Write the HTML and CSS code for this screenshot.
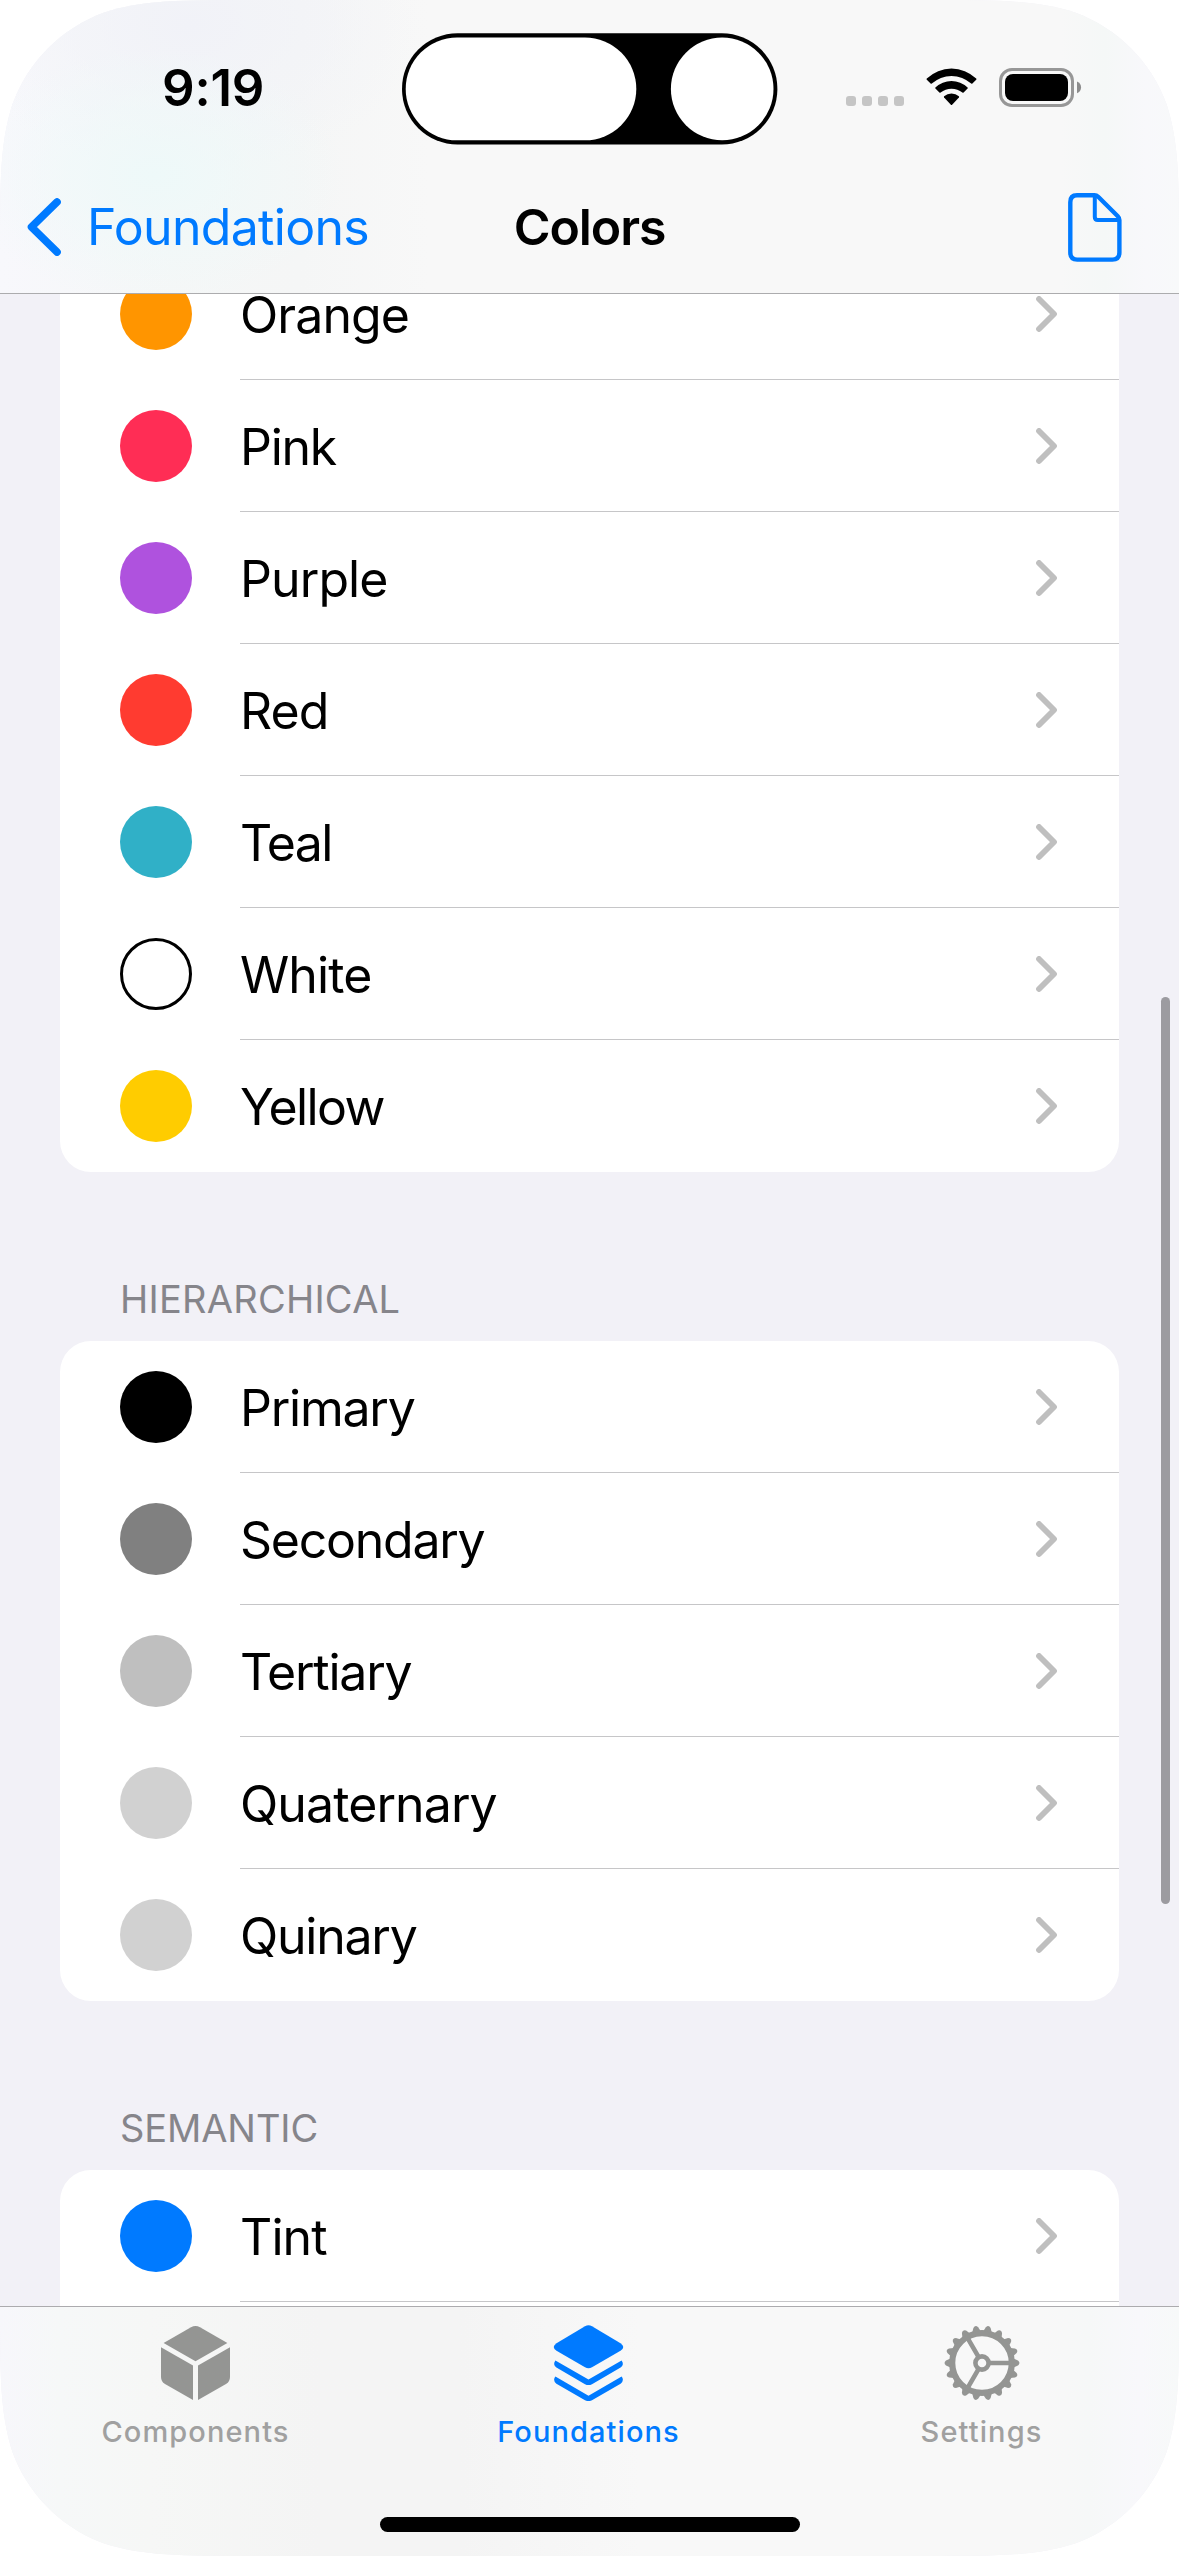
FILE: index.html
```html
<!DOCTYPE html>
<html lang="en">
<head>
<meta charset="utf-8">
<title>Colors</title>
<link rel="stylesheet" href="styles.css">
</head>
<body>
<svg class="defs" width="0" height="0" aria-hidden="true">
  <symbol id="chevron" viewBox="0 0 21 36"><path d="M3 3 L18 18 L3 33" fill="none" stroke="#bfbfbf" stroke-width="5.8" stroke-linecap="round" stroke-linejoin="round"/></symbol>
</svg>
<div class="screen">
  <header class="top">
    <div class="status">
      <div class="time">9:19</div>
      <svg class="island" width="376" height="112" viewBox="0 0 376 112">
        <rect x="0" y="0.3" width="375.4" height="111.2" rx="55.6" fill="#000"/>
        <rect x="3.7" y="4.5" width="230.6" height="102.8" rx="51.4" fill="#fff"/>
        <circle cx="320.2" cy="55.9" r="51.3" fill="#fff"/>
      </svg>
      <div class="indicators">
        <svg class="cell" width="58" height="10" viewBox="0 0 58 10" fill="#c5c5c5"><rect width="10" height="10" rx="3"/><rect x="16" width="10" height="10" rx="3"/><rect x="32" width="10" height="10" rx="3"/><rect x="48" width="10" height="10" rx="3"/></svg>
        <svg width="51" height="38" viewBox="0 0 51 38">
          <path d="M0.8 10.6 A35.5 35.5 0 0 1 50.2 10.6 Q50.7 11.2 50.2 11.8 L46.4 15.6 Q45.8 16.1 45.2 15.6 A29 29 0 0 0 5.8 15.6 Q5.2 16.1 4.6 15.6 L0.8 11.8 Q0.3 11.2 0.8 10.6Z"/>
          <path d="M9.4 19.4 A23.5 23.5 0 0 1 41.6 19.4 Q42.1 20 41.6 20.6 L37.6 24.6 Q37 25.1 36.4 24.6 A17 17 0 0 0 14.6 24.6 Q14 25.1 13.4 24.6 L9.4 20.6 Q8.9 20 9.4 19.4Z"/>
          <path d="M18.1 28.3 A11.5 11.5 0 0 1 32.9 28.3 Q33.4 28.9 32.9 29.5 L26.1 36.7 Q25.5 37.2 24.9 36.7 L18.1 29.5 Q17.6 28.9 18.1 28.3Z"/>
        </svg>
        <svg class="battery" width="83" height="39" viewBox="0 0 83 39"><rect x="1.5" y="1.5" width="72" height="36" rx="11.5" fill="none" stroke="#979797" stroke-width="3"/><rect x="6" y="6" width="63" height="27" rx="8"/><path d="M78 13.6 C83.4 15.4 83.4 23.4 78 25.2Z" fill="#8c8c8c"/></svg>
      </div>
    </div>
    <nav class="navbar">
      <a class="back"><svg width="34" height="58" viewBox="0 0 34 58"><path d="M30 4 L4.5 29 L30 54" fill="none" stroke="#007aff" stroke-width="7.6" stroke-linecap="round" stroke-linejoin="round"/></svg><span>Foundations</span></a>
      <h1>Colors</h1>
      <svg class="doc" width="54" height="69" viewBox="0 0 54 69" fill="none" stroke="#007aff" stroke-width="4.4" stroke-linejoin="round"><path d="M9 2.3 H26.5 Q28.6 2.3 30.2 3.8 L49.8 23.2 Q51.4 24.8 51.4 27 V59.5 Q51.4 66.6 44.4 66.6 H9.2 Q2.3 66.6 2.3 59.5 V9.2 Q2.3 2.3 9 2.3Z"/><path d="M26.8 3.5 V24 Q26.8 27 29.8 27 H50.5" stroke-width="4"/></svg>
    </nav>
  </header>
  <main class="content">
    <ul class="card first">
      <li class="row"><i class="dot orange"></i><div class="cell-body"><span>Orange</span><svg class="chev"><use href="#chevron"/></svg></div></li>
      <li class="row"><i class="dot pink"></i><div class="cell-body"><span class="snug">Pink</span><svg class="chev"><use href="#chevron"/></svg></div></li>
      <li class="row"><i class="dot purple"></i><div class="cell-body"><span>Purple</span><svg class="chev"><use href="#chevron"/></svg></div></li>
      <li class="row"><i class="dot red"></i><div class="cell-body"><span>Red</span><svg class="chev"><use href="#chevron"/></svg></div></li>
      <li class="row"><i class="dot teal"></i><div class="cell-body"><span class="tight">Teal</span><svg class="chev"><use href="#chevron"/></svg></div></li>
      <li class="row"><i class="dot white"></i><div class="cell-body"><span>White</span><svg class="chev"><use href="#chevron"/></svg></div></li>
      <li class="row"><i class="dot yellow"></i><div class="cell-body"><span class="tight">Yellow</span><svg class="chev"><use href="#chevron"/></svg></div></li>
    </ul>
    <h2 class="wide">HIERARCHICAL</h2>
    <ul class="card">
      <li class="row"><i class="dot primary"></i><div class="cell-body"><span class="snug">Primary</span><svg class="chev"><use href="#chevron"/></svg></div></li>
      <li class="row"><i class="dot secondary"></i><div class="cell-body"><span class="snug">Secondary</span><svg class="chev"><use href="#chevron"/></svg></div></li>
      <li class="row"><i class="dot tertiary"></i><div class="cell-body"><span class="snug">Tertiary</span><svg class="chev"><use href="#chevron"/></svg></div></li>
      <li class="row"><i class="dot quaternary"></i><div class="cell-body"><span>Quaternary</span><svg class="chev"><use href="#chevron"/></svg></div></li>
      <li class="row"><i class="dot quinary"></i><div class="cell-body"><span class="snug">Quinary</span><svg class="chev"><use href="#chevron"/></svg></div></li>
    </ul>
    <h2>SEMANTIC</h2>
    <ul class="card continued">
      <li class="row"><i class="dot tint"></i><div class="cell-body"><span>Tint</span><svg class="chev"><use href="#chevron"/></svg></div></li>
    </ul>
    <div class="scrollbar"></div>
  </main>
  <footer class="tabs">
    <div class="tab-row">
      <a class="tab">
        <svg width="76" height="76" viewBox="0 0 76 76" fill="#949593"><path d="M5.6 18 L33 2.2 Q37.5 -0.2 42 2.2 L69.4 18 L37.5 36.2Z"/><path d="M3 22.2 L35 40.6 V75 L7 59 Q3 56.5 3 52Z"/><path d="M72 22.2 L40 40.6 V75 L68 59 Q72 56.5 72 52Z"/></svg>
        <span>Components</span>
      </a>
      <a class="tab active">
        <svg width="76" height="76" viewBox="0 0 76 76" fill="#007aff"><path d="M34 1.2 Q37.5 -0.8 41 1.2 L69.5 18.2 Q75 22 69.5 25.8 L41 42.3 Q37.5 44.2 34 42.3 L5.5 25.8 Q0 22 5.5 18.2Z"/><path d="M4.4 35.4 L37.5 54.6 L70.6 35.4 Q73.6 39.2 69.6 42.6 L41 59.2 Q37.5 61 34 59.2 L5.4 42.6 Q1.4 39.2 4.4 35.4Z"/><path d="M4.4 51.6 L37.5 70.8 L70.6 51.6 Q73.6 55.4 69.6 58.8 L41 75.2 Q37.5 77 34 75.2 L5.4 58.8 Q1.4 55.4 4.4 51.6Z"/></svg>
        <span>Foundations</span>
      </a>
      <a class="tab">
        <svg width="76" height="76" viewBox="-38 -38 76 76" fill="none" stroke="#949593">
          <circle r="29.8" stroke-width="6.2"/>
          <circle r="6.6" stroke-width="4.6"/>
          <path stroke-width="4.6" d="M7 0 H29 M-3.5 -6.1 L-14.5 -25.1 M-3.5 6.1 L-14.5 25.1"/>
          <g id="teeth" fill="#949593" stroke="none">
            <g id="quad"><path id="tooth" d="M31.5 -4.4 L36 -2.4 Q38.9 0 36 2.4 L31.5 4.4Z"/><use href="#tooth" transform="rotate(20)"/><use href="#tooth" transform="rotate(40)"/></g>
            <use href="#quad" transform="rotate(60)"/><use href="#quad" transform="rotate(120)"/><use href="#quad" transform="rotate(180)"/><use href="#quad" transform="rotate(240)"/><use href="#quad" transform="rotate(300)"/>
          </g>
        </svg>
        <span>Settings</span>
      </a>
    </div>
    <div class="home"></div>
  </footer>
</div>
</body>
</html>
```
FILE: styles.css
```css
* { box-sizing: border-box; }
body {
  margin: 0;
  background: #fff;
  color: #000;
  font-family: Inter, "Liberation Sans", sans-serif;
}
.defs { position: absolute; }
svg { display: block; flex: none; }
h1, h2, ul { margin: 0; padding: 0; }
.screen {
  width: 1179px;
  height: 2556px;
  display: flex;
  flex-direction: column;
  background: #f2f1f7;
  overflow: hidden;
  clip-path: path("M252 0 H927 C999 0 1036 0 1075 12.4 C1117.5 27.9 1151 61.5 1166.6 104.2 C1179 143 1179 180 1179 252 V2304 C1179 2376 1179 2413 1166.6 2452 C1151 2494.5 1117.5 2528 1075 2543.6 C1036 2556 999 2556 927 2556 H252 C180 2556 143 2556 104.2 2543.6 C61.5 2528 27.9 2494.5 12.4 2452 C0 2413 0 2376 0 2304 V252 C0 180 0 143 12.4 104.2 C27.9 61.5 61.5 27.9 104.2 12.4 C143 0 180 0 252 0 Z");
}
.top {
  height: 294px;
  flex: none;
  border-bottom: 1px solid #acacae;
  background:
    radial-gradient(ellipse 190px 130px at 155px 175px, #eef9f9 0%, #eef9f900 100%),
    radial-gradient(ellipse 230px 150px at 190px 25px, #f1f2f8 0%, #f1f2f800 100%),
    linear-gradient(90deg, #f8f8fc 0, #f5f7f7 170px, #f5f6f6 300px, #f8f8f8 430px, #f8f8f8 1060px, #f5f8f7 1105px, #f8f8fb 1145px, #f8f9fa 100%);
}
.status {
  height: 162px;
  display: grid;
  grid-template-columns: 402px 376px 401px;
}
.time {
  padding: 58px 0 0 162px;
  font-size: 51px;
  line-height: 60px;
  font-weight: 600;
  letter-spacing: -0.2px;
}
.island { margin-top: 33px; }
.indicators {
  display: flex;
  align-items: flex-end;
  height: 106px;
  padding-left: 68px;
}
.cell { margin-right: 22px; }
.battery { margin: 0 0 -1px 22px; }
.navbar {
  height: 131px;
  padding: 0 57px;
  display: grid;
  grid-template-columns: 1fr auto 1fr;
  align-items: center;
}
.back {
  margin-left: -30px;
  display: flex;
  align-items: center;
  gap: 26px;
  color: #007aff;
  font-size: 50px;
  line-height: 60px;
  letter-spacing: -0.7px;
}
.back svg { margin-top: -1px; }
.back span, h1 { padding-bottom: 2px; }
h1 {
  font-size: 50px;
  line-height: 60px;
  font-weight: 600;
  letter-spacing: -1.1px;
}
.doc { justify-self: end; }
.content {
  position: relative;
  flex: 1;
  min-height: 0;
  overflow: hidden;
  padding: 0 60px;
}
.card {
  list-style: none;
  background: #fff;
  border-radius: 31px;
}
.first { margin-top: -46px; }
.continued { padding-bottom: 60px; }
.row {
  height: 132px;
  padding-left: 60px;
  display: flex;
  align-items: center;
}
.dot {
  width: 72px;
  height: 72px;
  border-radius: 50%;
  margin-right: 48px;
  flex: none;
}
.cell-body {
  flex: 1;
  height: 132px;
  border-bottom: 1px solid #c6c6c8;
  padding-right: 62px;
  display: flex;
  align-items: center;
  justify-content: space-between;
}
.row:last-child .cell-body { border-bottom-color: transparent; }
.continued .row:last-child .cell-body { border-bottom-color: #c6c6c8; }
.cell-body span {
  padding-top: 3px;
  font-size: 50px;
  line-height: 60px;
  letter-spacing: -0.9px;
}
.cell-body .snug { letter-spacing: -1.25px; }
.cell-body .tight { letter-spacing: -1.6px; }
.chev { width: 21px; height: 36px; }
.orange { background: #ff9500; }
.pink { background: #ff2d55; }
.purple { background: #af52de; }
.red { background: #ff3b30; }
.teal { background: #30b0c7; }
.white { background: #fff; border: 3px solid #000; }
.yellow { background: #ffcc00; }
.primary { background: #000; }
.secondary { background: #808080; }
.tertiary { background: #bfbfbf; }
.quaternary, .quinary { background: #d1d1d1; }
.tint { background: #007aff; }
h2 {
  height: 169px;
  padding: 104px 0 0 60px;
  font-size: 38px;
  line-height: 46px;
  font-weight: 400;
  letter-spacing: -0.1px;
  color: #86858b;
}
.wide { letter-spacing: 0.25px; }
.scrollbar {
  position: absolute;
  left: 1161px;
  top: 703px;
  width: 9px;
  height: 907px;
  border-radius: 5px;
  background: #9c9ba0;
}
.tabs {
  height: 250px;
  flex: none;
  border-top: 1px solid #acabae;
  background: linear-gradient(90deg, #f7f7fb 0, #f6f8f8 60px, #f6f7f6 150px, #f4f4f4 320px, #f4f4f4 460px, #f8f8f8 640px, #f8f8f8 1040px, #f6f8f8 1090px, #f8f8fb 1140px, #f7f9f9 100%);
  display: flex;
  flex-direction: column;
  align-items: center;
  justify-content: space-between;
  padding-bottom: 24px;
}
.tab-row {
  align-self: stretch;
  display: grid;
  grid-template-columns: repeat(3, 393px);
  margin-left: -1px;
  padding-top: 18px;
}
.tab {
  display: flex;
  flex-direction: column;
  align-items: center;
  gap: 13px;
  color: #a0a0a0;
  font-size: 29px;
  line-height: 36px;
  font-weight: 500;
  letter-spacing: 1.1px;
}
.active { color: #007aff; }
.home {
  width: 420px;
  height: 15px;
  border-radius: 8px;
  background: #000;
}
```
